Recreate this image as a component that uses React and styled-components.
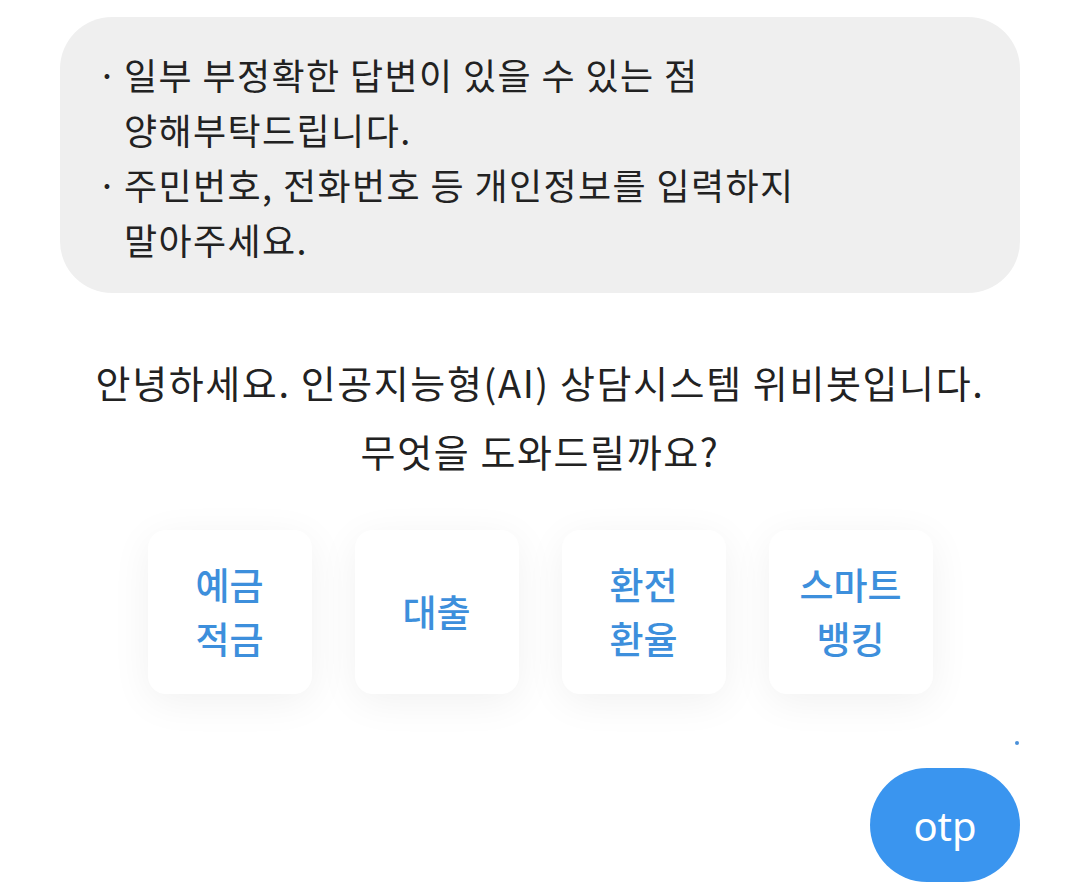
import React from 'react';
import styled, { createGlobalStyle } from 'styled-components';

const GlobalStyle = createGlobalStyle`
  html, body {
    margin: 0;
    padding: 0;
    background: #ffffff;
  }
  body {
    font-family: "Noto Sans CJK KR", "Noto Sans", sans-serif;
    color: #1f1f1f;
  }
`;

const Page = styled.div`
  width: 1080px;
  height: 892px;
  box-sizing: border-box;
  padding: 17px 60px 0 60px;
  display: flex;
  flex-direction: column;
  overflow: hidden;
`;

const Notice = styled.div`
  background: #efefef;
  border-radius: 52px;
  height: 276px;
  box-sizing: border-box;
  padding: 30px 40px 0 37px;
`;

const NoticeItem = styled.div`
  display: flex;
  font-size: 36px;
  line-height: 55px;
  letter-spacing: 1.4px;
  color: #222;
`;

const Dot = styled.span`
  width: 27px;
  flex-shrink: 0;
`;

const Greeting = styled.div`
  margin-top: 54px;
  text-align: center;
  font-size: 38px;
  line-height: 69px;
  letter-spacing: 1.6px;
  color: #222;
`;

const Menu = styled.div`
  margin-top: 45px;
  display: flex;
  justify-content: center;
  gap: 43px;
`;

const Card = styled.button`
  width: 164px;
  height: 164px;
  border: none;
  border-radius: 18px;
  background: #ffffff;
  box-shadow: 0 8px 40px rgba(0, 0, 0, 0.06);
  display: flex;
  align-items: center;
  justify-content: center;
  font-family: inherit;
  font-size: 37px;
  font-weight: 500;
  line-height: 54px;
  color: #3d8fdc;
  padding: 0;
  padding-bottom: 2px;
`;

const Footer = styled.div`
  margin-top: 47px;
  display: flex;
  flex-direction: column;
  align-items: flex-end;
`;

const Indicator = styled.span`
  width: 4px;
  height: 4px;
  border-radius: 50%;
  background: #4a90d9;
  margin-right: 1px;
`;

const OtpButton = styled.button`
  margin-top: 23px;
  width: 150px;
  height: 114px;
  border: none;
  border-radius: 57px;
  background: #3a95ef;
  color: #ffffff;
  font-family: "Noto Sans", sans-serif;
  font-size: 40px;
  padding: 0;
`;

const menus = [
  ['예금', '적금'],
  ['대출'],
  ['환전', '환율'],
  ['스마트', '뱅킹'],
];

function App() {
  return (
    <>
      <GlobalStyle />
      <Page>
        <Notice>
          <NoticeItem>
            <Dot>·</Dot>
            <span>일부 부정확한 답변이 있을 수 있는 점<br />양해부탁드립니다.</span>
          </NoticeItem>
          <NoticeItem>
            <Dot>·</Dot>
            <span>주민번호, 전화번호 등 개인정보를 입력하지<br />말아주세요.</span>
          </NoticeItem>
        </Notice>

        <Greeting>
          안녕하세요. 인공지능형(AI) 상담시스템 위비봇입니다.<br />
          무엇을 도와드릴까요?
        </Greeting>

        <Menu>
          {menus.map((lines) => (
            <Card key={lines.join('')}>
              <span>
                {lines.map((l, i) => (
                  <React.Fragment key={l}>
                    {i > 0 && <br />}
                    {l}
                  </React.Fragment>
                ))}
              </span>
            </Card>
          ))}
        </Menu>

        <Footer>
          <Indicator />
          <OtpButton>otp</OtpButton>
        </Footer>
      </Page>
    </>
  );
}

export default App;
